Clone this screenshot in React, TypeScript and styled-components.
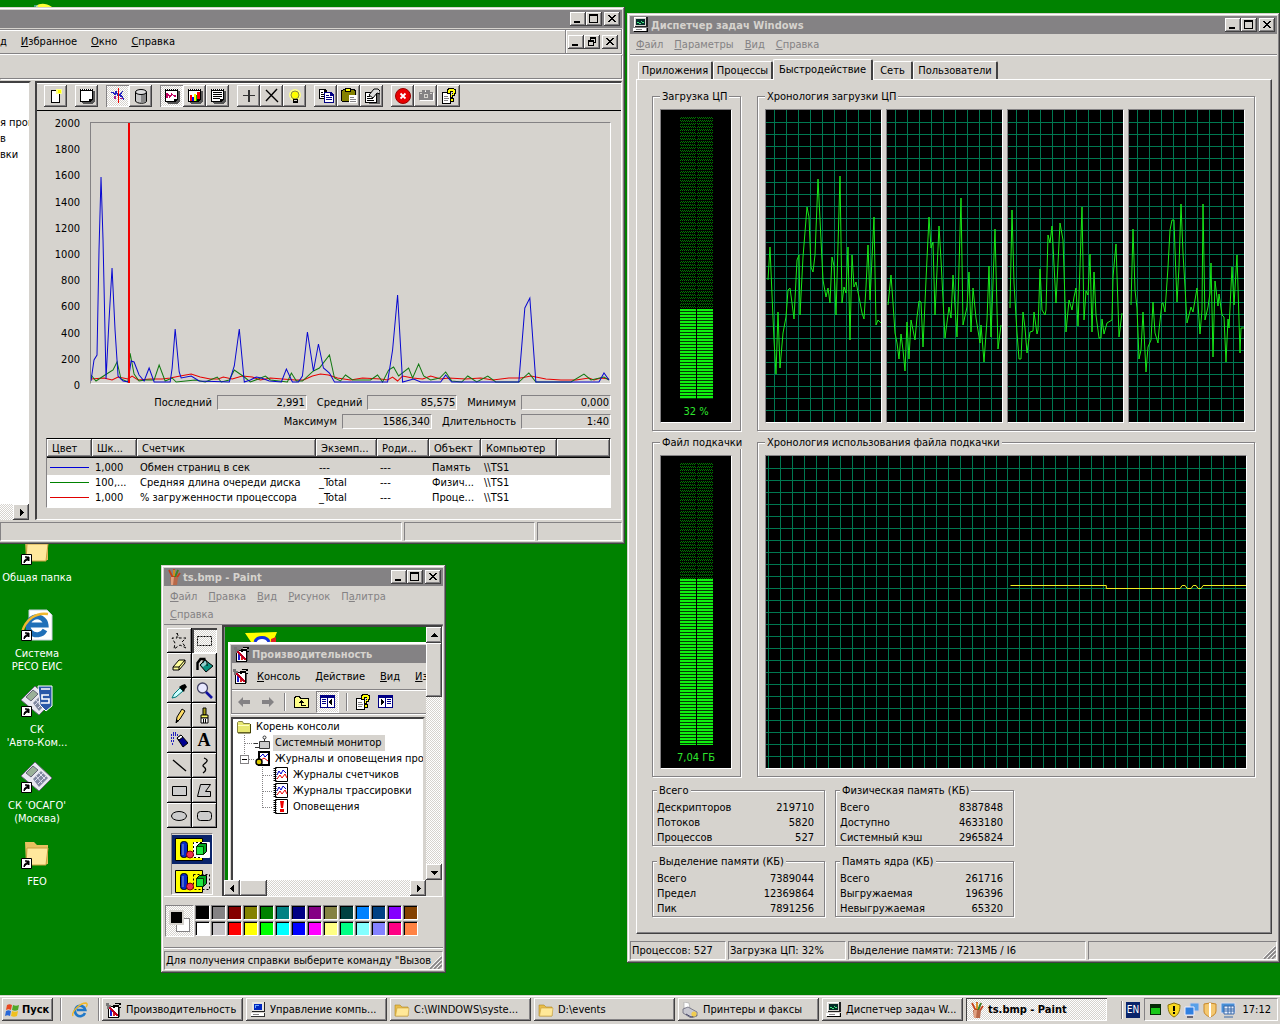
import React from "react";
import styled, { createGlobalStyle, css } from "styled-components";

const c = {
  face: "#d6d3ce",
  light: "#ffffff",
  shadow: "#848284",
  dark: "#424142",
  desk: "#008200",
};

const Global = createGlobalStyle`
  *, *::before, *::after { box-sizing: border-box; }
  body { margin: 0; background: ${c.desk}; }
  body, button, input, table {
    font-family: "DejaVu Sans Condensed", "DejaVu Sans", Tahoma, sans-serif;
    font-size: 11px;
    line-height: 13px;
    color: #000;
  }
  button { border: 0; padding: 0; margin: 0; background: none; }
  svg { display: block; flex: none; }
`;

const raised = css`
  background: ${c.face};
  box-shadow: inset -1px -1px ${c.dark}, inset 1px 1px ${c.light}, inset -2px -2px ${c.shadow};
`;
const sunken = css`
  border: 1px solid;
  border-color: ${c.shadow} ${c.light} ${c.light} ${c.shadow};
`;
const checker = css`
  background: repeating-conic-gradient(${c.face} 0 25%, ${c.light} 0 50%) 0 0 / 2px 2px;
`;

/* ---------- desktop ---------- */
const Screen = styled.div`
  min-height: 100vh;
  display: flex;
  flex-direction: column;
  overflow: hidden;
`;
const Desktop = styled.main`
  position: relative;
  flex: 1;
  background: ${c.desk};
`;
const Shortcuts = styled.nav`
  position: absolute;
  left: 0;
  top: 533px;
  width: 74px;
  display: grid;
  grid-auto-rows: 76px;
`;
const Shortcut = styled.a`
  display: flex;
  flex-direction: column;
  align-items: center;
  gap: 5px;
  color: #fff;
  text-decoration: none;
  text-align: center;
  white-space: pre-line;
`;
const Peek = styled.div`
  position: absolute;
  left: 34px;
  top: 3px;
`;
const Win = styled.section<{ x: number; y: number; w: number; cut?: boolean }>`
  position: absolute;
  left: ${(p) => p.x}px;
  top: ${(p) => p.y}px;
  width: ${(p) => p.w}px;
  padding: ${(p) => (p.cut ? "3px 3px 3px 0" : "3px")};
  display: flex;
  flex-direction: column;
  background: ${c.face};
  box-shadow: inset -1px -1px ${c.dark},
    inset ${(p) => (p.cut ? 0 : 1)}px 1px ${c.face},
    inset -2px -2px ${c.shadow},
    inset ${(p) => (p.cut ? 0 : 2)}px 2px ${c.light};
`;
const TitleBar = styled.header`
  height: 18px;
  padding: 0 2px 0 3px;
  display: flex;
  align-items: center;
  gap: 2px;
  background: ${c.shadow};
  color: ${c.face};
  font-weight: bold;
  white-space: nowrap;
`;
const Grow = styled.span`
  flex: 1;
`;
const Controls = styled.div`
  display: flex;
`;
const CtlButton = styled.button`
  width: 16px;
  height: 14px;
  display: grid;
  place-items: center;
  ${raised}
  &:last-child { margin-left: 2px; }
`;

const WindowControls = ({ restore }: { restore?: boolean }) => (
  <Controls>
    <CtlButton aria-label="Свернуть">
      <svg width="10" height="10" shapeRendering="crispEdges"><path d="M1 7h6v2H1z" /></svg>
    </CtlButton>
    <CtlButton aria-label={restore ? "Восстановить" : "Развернуть"}>
      <svg width="10" height="10" shapeRendering="crispEdges">
        {restore ? (
          <path d="M3 0h6v6H7V5h1V2H4v1H3zM1 3h6v6H1zM2 5v3h4V5z" fillRule="evenodd" />
        ) : (
          <path d="M0 0h9v9H0zM1 2v6h7V2z" fillRule="evenodd" />
        )}
      </svg>
    </CtlButton>
    <CtlButton aria-label="Закрыть">
      <svg width="10" height="10" shapeRendering="crispEdges">
        <path d="M1 1h2v1h1v1h2V2h1V1h2v1H8v1H7v1H6v1h1v1h1v1h1v1H7V7H6V6H4v1H3v1H1V7h1V6h1V5h1V4H3V3H2V2H1z" />
      </svg>
    </CtlButton>
  </Controls>
);

const MenuBar = styled.div<{ pad?: string; gap?: number }>`
  display: flex;
  flex-wrap: wrap;
  align-items: center;
  column-gap: ${(p) => p.gap ?? 11}px;
  padding: ${(p) => p.pad ?? "0 6px"};
`;
const MenuButton = styled.button<{ dim?: boolean }>`
  height: 18px;
  color: ${(p) => (p.dim ? c.shadow : "#000")};
  white-space: nowrap;
`;
const Access = ({ text }: { text: string }) => {
  const [a, b] = text.split("&");
  return b === undefined ? <>{a}</> : <>{a}<u>{b[0]}</u>{b.slice(1)}</>;
};
const Menu = ({ items, dim, pad, gap }: { items: string[]; dim?: boolean; pad?: string; gap?: number }) => (
  <MenuBar pad={pad} gap={gap}>
    {items.map((t) => (
      <MenuButton key={t} dim={dim}><Access text={t} /></MenuButton>
    ))}
  </MenuBar>
);

/* ---------- small drawings ---------- */
const Folder = ({ s = 16 }: { s?: number }) => (
  <svg width={s} height={s} viewBox="0 0 16 16">
    <path d="M1 3h5l2 2h6v9H1z" fill="#e8bc48" stroke="#b08820" strokeWidth=".6" />
    <path d="M3 6h12l-1 8H1.5z" fill="#ffe898" stroke="#c8a040" strokeWidth=".6" />
  </svg>
);
const ConsoleFolder = () => (
  <svg width="16" height="16">
    <path d="M1.500 3.500l1-1h4l1 2h6l1 1v8h-13z" fill="#e8e870" stroke="#848242" />
    <path d="M2 6.500h11" stroke="#ffffc0" />
    <path d="M14.500 5v9H2" stroke="#424100" fill="none" />
  </svg>
);
const IeGlyph = ({ s = 16 }: { s?: number }) => (
  <svg width={s} height={s} viewBox="0 0 16 16" fill="none">
    <path d="M13 11a5.2 5.2 0 1 1 .3-3H5" stroke="#2078c8" strokeWidth="2.6" />
    <path d="M1 14C-1 10 8 1 14 1c2 1 1 3 0 4" stroke="#f0b828" strokeWidth="1.4" />
  </svg>
);
const Monitor = () => (
  <svg width="16" height="16" shapeRendering="crispEdges">
    <path d="M1 0h13v10H1z" fill="#d6d3ce" />
    <path d="M1 0h12v1H2v9H1z" fill="#fff" />
    <path d="M13 0h2v10h-2zM2 9h12v1H2z" fill="#222" />
    <path d="M3 2h9v6H3z" fill="#042c28" />
    <path d="M4 5h2v1h2V4h1v1h2v1H9V5H8v2H6V6H4z" fill="#40f080" />
    <path d="M0 11h13v3H0z" fill="#fff" />
    <path d="M1 14h13v-3h1v4H1z" />
    <path d="M3 12h6v1H3z" fill="#848284" />
  </svg>
);
const Computer = () => (
  <svg width="16" height="16" shapeRendering="crispEdges">
    <path d="M2 0h13v10H2z" fill="#222" />
    <path d="M2 0h12v9H2z" fill="#e8e6e0" />
    <path d="M4 2h8v6H4z" fill="#0028c0" />
    <path d="M5 3h4v1H6v2H5z" fill="#68a8ff" />
    <path d="M1 11h14v4H1z" fill="#333" />
    <path d="M1 11h13v3H1z" fill="#fff" />
    <path d="M3 12h6v1H3z" fill="#848284" />
  </svg>
);
const PerfIcon = () => (
  <svg width="16" height="16" shapeRendering="crispEdges">
    <path d="M2 4h11v12H2z" />
    <path d="M3 5h9v10H3z" fill="#fff" />
    <path d="M4 8h2v6H4z" fill="#2020d0" />
    <path d="M7 9h2v5H7z" fill="#e02020" />
    <path d="M10 11h1v3h-1z" fill="#2020d0" />
    <path d="M3 5l9 9" stroke="#c00020" strokeWidth="1.6" />
    <path d="M0 1h3v2h2v2H3v2H1V4H0z" fill="#777" />
    <path d="M7 3h2V1h6v2h-2v2h2v1h-3V4H9v2H7z" />
    <path d="M9 2h4v1H9z" fill="#d6d3ce" />
    <path d="M13 6h1v9h-1z" fill="#555" />
  </svg>
);
const PaintIcon = () => (
  <svg width="14" height="16">
    <path d="M2 1l4 8M11 1L8 9M7 0v9M13 4l-4 6" stroke="#c44018" strokeWidth="1.7" />
    <path d="M11 1l-3 7" stroke="#2c8c30" strokeWidth="1.7" /><path d="M7 1v6" stroke="#e8d020" />
    <path d="M3 8h8l-1 8H4z" fill="#b86848" /><path d="M4 8h3l-1 8H4z" fill="#e0a080" />
  </svg>
);
const Printer = () => (
  <svg width="17" height="16">
    <path d="M2 0l5 1 1 6-6-1z" fill="#fff" stroke="#aaa" strokeWidth=".7" />
    <path d="M1 7l5-2 9 5v4l-6 2-8-5z" fill="#c8c8d0" stroke="#667" strokeWidth=".8" />
    <path d="M4 12l5 3 6-2" stroke="#446" fill="none" /><circle cx="12" cy="12" r="2.6" fill="#f0cc50" />
  </svg>
);
const Arrow = ({ d }: { d: "up" | "down" | "left" | "right" }) => (
  <svg width="7" height="7" shapeRendering="crispEdges">
    <path d={{ up: "M3 1h1v1h1v1h1v1h1v1H0V4h1V3h1V2h1z", down: "M0 2h7v1H6v1H5v1H4v1H3V5H2V4H1V3H0z", left: "M5 0v7H4V6H3V5H2V4H1V3h1V2h1V1h1V0z", right: "M2 0v7h1V6h1V5h1V4h1V3H5V2H4V1H3V0z" }[d]} />
  </svg>
);
const HelpSheet = () => (
  <svg width="16" height="16" shapeRendering="crispEdges">
    <path d="M1 4h9v12H1z" />
    <path d="M2 5h7v10H2z" fill="#fff" />
    <path d="M3 8h4v1H3zM3 10h5v1H3zM3 12h4v1H3z" fill="#848284" />
    <path d="M7 0h6v1h2v5h-1v2h-2v2H9V7h2V5h1V4H9v2H6V1h1z" />
    <path d="M8 1h5v1h1v3h-1v2h-2v2h-1V7h1V6h1V3H9v2H7V2h1z" fill="#ff0" />
    <path d="M9 10h4v4H9z" />
    <path d="M10 11h2v2h-2z" fill="#ff0" />
  </svg>
);

/* ---------- performance console ---------- */
const ConsoleMenuRow = styled.div`
  margin-top: 1px;
  height: 25px;
  display: flex;
  border: 1px solid ${c.shadow};
  border-width: 1px 1px 1px 0;
  box-shadow: inset 0 1px ${c.light}, 0 1px ${c.light}, 1px 0 ${c.light};
  overflow: hidden;
`;
const MdiBox = styled.div`
  margin-left: auto;
  padding: 0 3px 0 2px;
  display: flex;
  align-items: center;
  border-left: 1px solid ${c.shadow};
  box-shadow: inset 1px 0 ${c.light};
`;
const ConsoleToolRow = styled.div`
  height: 24px;
  margin-top: 1px;
  border: 1px solid ${c.shadow};
  border-width: 0 1px 1px 0;
  box-shadow: 1px 1px ${c.light};
`;
const ConsoleBody = styled.div`
  margin-top: 2px;
  display: flex;
  gap: 4px;
`;
const TreeSliver = styled.div`
  width: 31px;
  flex: none;
  display: flex;
  flex-direction: column;
  background: #fff;
  border-top: 2px solid ${c.dark};
  border-right: 2px solid ${c.face};
  overflow: hidden;
`;
const TreeLines = styled.div`
  flex: 1;
  padding-top: 32px;
  line-height: 16px;
  white-space: pre;
`;
const ScrollBtn = styled.button`
  width: 16px;
  height: 16px;
  flex: none;
  display: grid;
  place-items: center;
  ${raised}
`;
const Track = styled.div<{ vertical?: boolean; end?: boolean }>`
  display: flex;
  flex-direction: ${(p) => (p.vertical ? "column" : "row")};
  justify-content: ${(p) => (p.end ? "flex-end" : "flex-start")};
  flex: none;
  ${checker}
`;
const Thumb = styled.div<{ len: number; vertical?: boolean }>`
  width: ${(p) => (p.vertical ? 16 : p.len)}px;
  height: ${(p) => (p.vertical ? p.len : 16)}px;
  ${raised}
`;
const Panel = styled.div`
  flex: 1;
  min-width: 0;
  border: 1px solid ${c.light};
  border-left: 2px solid ${c.dark};
  border-top: 2px solid ${c.dark};
`;
const Tools = styled.div`
  height: 28px;
  padding: 2px 7px;
  display: flex;
  gap: 8px;
  border-bottom: 1px solid #000;
  box-shadow: inset 0 1px ${c.light};
`;
const ToolSet = styled.div`
  display: flex;
`;
const Tool = styled.button<{ on?: boolean }>`
  width: 23px;
  height: 22px;
  display: grid;
  place-items: center;
  ${(p) =>
    p.on
      ? css`${checker} box-shadow: inset 1px 1px ${c.shadow}, inset -1px -1px ${c.light};`
      : raised}
`;
const PanelBody = styled.div`
  padding: 5px 10px 11px 9px;
`;
const ChartRow = styled.div`
  display: flex;
  gap: 10px;
`;
const Axis = styled.div`
  width: 34px;
  padding-top: 1px;
  display: flex;
  flex-direction: column;
  justify-content: space-between;
  text-align: right;
`;
const Plot = styled.div`
  flex: 1;
  margin: 6px 0 8px;
  ${sunken}
`;
const Stats = styled.div`
  margin-top: 3px;
  display: grid;
  gap: 4px;
`;
const StatRow = styled.div`
  display: flex;
  justify-content: flex-end;
  gap: 10px;
`;
const Stat = styled.label`
  display: flex;
  align-items: center;
  gap: 5px;
`;
const StatBox = styled.input`
  width: 90px;
  height: 15px;
  padding: 0 1px;
  text-align: right;
  background: transparent;
  outline: 0;
  ${sunken}
`;
const CounterBox = styled.div`
  margin-top: 9px;
  padding-bottom: 2px;
  background: #fff;
  border: 1px solid;
  border-color: #000 ${c.light} ${c.light} ${c.shadow};
`;
const Counters = styled.table`
  width: 100%;
  table-layout: fixed;
  border-collapse: separate;
  border-spacing: 0;
  th {
    height: 19px;
    padding: 0 0 0 5px;
    text-align: left;
    font-weight: normal;
    border-bottom: 1px solid #000;
    ${raised}
  }
  td { height: 15px; padding: 0 0 0 3px; }
  th, td { white-space: nowrap; overflow: hidden; }
  tbody tr:first-child { background: ${c.face}; }
  tbody tr:first-child td { height: 17px; padding-top: 1px; }
`;
const StatusBar = styled.footer<{ cols: string; top?: number }>`
  margin-top: ${(p) => p.top ?? 2}px;
  height: 19px;
  display: grid;
  grid-template-columns: ${(p) => p.cols};
  column-gap: 2px;
`;
const StatusCell = styled.div`
  position: relative;
  padding: 2px 1px;
  white-space: nowrap;
  overflow: hidden;
  ${sunken}
`;
const GripBox = styled.span`
  position: absolute;
  right: 0;
  bottom: 0;
`;
const Grip = () => (
  <GripBox>
    <svg width="13" height="13">
      <path d="M1 13L13 1M5 13l8-8M9 13l4-4" stroke="#848284" strokeWidth="1.6" />
      <path d="M0 12L12 0M4 12l8-8M8 12l4-4" stroke="#fff" strokeWidth=".8" />
    </svg>
  </GripBox>
);

const blue = "91,381 94,360 97,355 99,250 101,177 103,240 106,379 109,320 112,268 115,330 118,376 123,381 128,382 131,361 134,362 139,375 144,381 149,368 154,382 170,382 172,368 175,329 179,372 181,378 191,376 199,381 229,382 234,366 239,329 244,382 250,380 256,377 261,378 269,381 281,382 286,369 292,382 298,382 302,376 307,332 313,371 318,344 323,368 329,373 334,382 387,382 392,350 397,295 402,382 413,379 420,382 440,382 445,375 451,382 518,382 524,308 529,298 535,382 598,382 603,373 608,380";
const green = "91,375 96,381 105,375 113,370 117,362 121,379 128,382 130,353 134,374 139,381 145,380 154,380 159,365 165,381 172,378 176,382 195,380 205,382 217,377 221,382 229,380 234,370 244,377 250,382 258,379 265,376 270,380 287,382 291,373 296,381 302,381 313,371 319,368 329,355 334,378 340,381 345,375 352,380 370,380 377,375 382,382 388,370 393,367 398,376 408,368 412,378 418,364 423,376 430,380 439,378 445,372 451,381 461,382 467,376 476,382 487,376 495,382 518,382 528,373 535,382 570,382 583,374 590,380 603,377 608,380";
const red = "91,379 104,378 112,380 118,377 128,379 132,376 138,380 150,379 162,379 170,378 180,376 191,374 200,377 210,379 218,379 223,377 232,379 242,376 252,377 260,380 270,378 282,379 295,380 303,380 312,376 320,374 328,375 337,378 350,380 362,378 380,379 387,380 392,377 397,381 402,376 412,378 422,379 430,376 440,379 448,378 465,379 480,378 492,380 508,378 520,378 530,376 545,379 560,380 575,380 588,378 593,380 600,378 608,379";

const sheet = (
  <>
    <path d="M3 3h13v10l-3 3H4v-1H3z" fill="#555" />
    <path d="M1 1h13v10l-3 3H1z" />
    <path d="M2 3h11v8h-3v2H2z" fill="#fff" />
    <path d="M2 1h1v1H2zM4 1h1v1H4zM6 1h1v1H6zM8 1h1v1H8zM10 1h1v1h-1zM12 1h1v1h-1z" fill="#fff" />
  </>
);
const toolIcons: Record<string, React.ReactNode> = {
  "Новый набор": <><path d="M3 2h9v13H3z" /><path d="M4 3h7v11H4z" fill="#fff" /><path d="M8 1h6v5H8z" fill="#ff8" /><path d="M10 2h3v3h-3z" fill="#ff0" /></>,
  "Очистить": sheet,
  "Текущая активность": <><path d="M1 4h2v1h1v1h1V3h1v2h1v3M9 6l2 3M10 5l4 7M13 3l-4 5" stroke="#2020c0" fill="none" /><path d="M10 10h3v1h-3zM4 8h2v3H4z" fill="#a0208c" /><path d="M8 0h1v15H8z" fill="#f00000" /></>,
  "Журнал": <g shapeRendering="auto"><path d="M2.500 4v9c1 3 11 3 11 0V4" fill="#c8c8c8" stroke="#000" /><path d="M8 6h5v8l-5 1z" fill="#888" /><ellipse cx="8" cy="4" rx="5.500" ry="2.500" fill="#ddd" stroke="#000" /></g>,
  "График": <>{sheet}<path d="M3 10V6h1l2 3 2-3 2 2h2" stroke="#c00060" fill="none" strokeWidth="1.400" /></>,
  "Гистограмма": <>{sheet}<path d="M3 7h2v6H3z" fill="#f00" /><path d="M5 9h2v4H5z" fill="#00f" /><path d="M7 6h2v7H7z" fill="#ff0" /><path d="M9 7h1v6H9z" fill="#0b0" /><path d="M10 4h3v7h-3z" fill="#f00" /></>,
  "Отчет": <>{sheet}<path d="M3 4h9v1H3zM3 6h9v1H3zM3 8h9v1H3zM3 10h7v1H3z" /></>,
  "Добавить": <path d="M7 2h2v5h5v1H9v6H7V8H2V7h5z" fill="#333" />,
  "Удалить": <path d="M2 2l12 12M13 1L2 13" stroke="#000" strokeWidth="1.400" shapeRendering="auto" />,
  "Выделить": <><g shapeRendering="auto"><circle cx="8" cy="7" r="6" fill="#ff8" /><circle cx="8" cy="7" r="4" fill="#ff0" stroke="#884" /></g><path d="M6 11h5v4H6z" /><path d="M7 12h3v1H7z" fill="#d6d3ce" /></>,
  "Копировать": <><path d="M1 1h6l2 2v8H1z" /><path d="M2 2h4v2h2v6H2z" fill="#fff" /><path d="M3 4h2v1H3zM3 6h4v1H3zM3 8h4v1H3z" /><path d="M6 4h7l3 3v8H6z" fill="#000084" /><path d="M7 5h5v3h3v6H7z" fill="#fff" /><path d="M8 7h3v1H8zM8 9h6v1H8zM8 11h6v1H8z" fill="#000084" /></>,
  "Вставить": <><path d="M0 2h2V1h12v1h1v12H1v-1H0z" /><path d="M1 3h1V2h11v1h1v10H1z" fill="#848200" /><path d="M4 0h6v4H4z" /><path d="M5 1h4v2H5z" fill="#ff0" /><path d="M8 7h8v8H8z" fill="#fff" /><path d="M9 9h4v1H9zM9 11h6v1H9zM9 13h6v1H9z" fill="#848284" /></>,
  "Свойства": <><path d="M5 4h11v12H5z" fill="#666" /><path d="M1 4h12v11H1z" /><path d="M2 5h10v9H2z" fill="#fff" /><path d="M3 8h3v1H3zM3 10h6v1H3zM3 12h7v1H3z" /><path d="M5 7l5-6h4l2 2v3l-3-1-4 5z" fill="#ddd" stroke="#000" shapeRendering="auto" /></>,
  "Стоп": <g shapeRendering="auto"><circle cx="8" cy="8" r="7.500" fill="#e80000" stroke="#900" /><path d="M5.500 5.500l5 5M10.500 5.500l-5 5" stroke="#fff" strokeWidth="1.800" /></g>,
  "Снимок": <><path d="M2 5h3V3h6v2h5v8H2z" fill="#fff" /><path d="M1 4h3V2h3v2h1V2h4v2h3v8H1z" fill="#848284" /><path d="M6 6h4v4H6zM2 5h2v1H2zM12 5h2v1h-2z" fill="#d6d3ce" /><path d="M7 7h2v2H7z" fill="#848284" /></>,
};
const toolSets = [["Новый набор"], ["Очистить"], ["Текущая активность", "Журнал"], ["График", "Гистограмма", "Отчет"], ["Добавить", "Удалить", "Выделить"], ["Копировать", "Вставить", "Свойства"], ["Стоп", "Снимок", "Справка"]];
const pressed = ["Текущая активность", "График"];

const counters = [
  ["#0000d8", "1,000", "Обмен страниц в сек", "---", "---", "Память", "\\\\TS1"],
  ["#008200", "100,...", "Средняя длина очереди диска", "_Total", "---", "Физич...", "\\\\TS1"],
  ["#e00000", "1,000", "% загруженности процессора", "_Total", "---", "Проце...", "\\\\TS1"],
];
const ColorLine = styled.hr<{ color: string }>`
  width: 39px;
  height: 1px;
  margin: 0;
  border: 0;
  background: ${(p) => p.color};
`;

const StatField = ({ name, value }: { name: string; value: string }) => (
  <Stat>{name}<StatBox readOnly value={value} /></Stat>
);

const PerformanceConsole = () => (
  <Win x={0} y={7} w={625} cut>
    <TitleBar><Grow /><WindowControls /></TitleBar>
    <ConsoleMenuRow>
      <Menu items={["д", "&Избранное", "&Окно", "&Справка"]} pad="0" gap={14} />
      <MdiBox><WindowControls restore /></MdiBox>
    </ConsoleMenuRow>
    <ConsoleToolRow />
    <ConsoleBody>
      <TreeSliver>
        <TreeLines>{"я прои\nв\nвки"}</TreeLines>
        <Track end><ScrollBtn aria-label="Вправо"><Arrow d="right" /></ScrollBtn></Track>
      </TreeSliver>
      <Panel>
        <Tools>
          {toolSets.map((set) => (
            <ToolSet key={set[0]}>
              {set.map((t) => (
                <Tool key={t} on={pressed.includes(t)} aria-label={t}>
                  {toolIcons[t] ? <svg width="16" height="16" shapeRendering="crispEdges">{toolIcons[t]}</svg> : <HelpSheet />}
                </Tool>
              ))}
            </ToolSet>
          ))}
        </Tools>
        <PanelBody>
          <ChartRow>
            <Axis>
              {[2000, 1800, 1600, 1400, 1200, 1000, 800, 600, 400, 200, 0].map((v) => <span key={v}>{v}</span>)}
            </Axis>
            <Plot>
              <svg width="100%" height="260" viewBox="91 123 518 260" preserveAspectRatio="none" fill="none">
                <polyline points={red} stroke="#e80000" />
                <polyline points={green} stroke="#107810" />
                <polyline points={blue} stroke="#0808d0" />
                <path d="M129 123v260" stroke="#f00000" strokeWidth="2" shapeRendering="crispEdges" />
              </svg>
            </Plot>
          </ChartRow>
          <Stats>
            <StatRow>
              <StatField name="Последний" value="2,991" />
              <StatField name="Средний" value="85,575" />
              <StatField name="Минимум" value="0,000" />
            </StatRow>
            <StatRow>
              <StatField name="Максимум" value="1586,340" />
              <StatField name="Длительность" value="1:40" />
            </StatRow>
          </Stats>
          <CounterBox>
            <Counters>
              <colgroup>
                {[45, 45, 179, 61, 52, 52, 76].map((w, i) => <col key={i} width={w} />)}
                <col />
              </colgroup>
              <thead>
                <tr>{["Цвет", "Шк...", "Счетчик", "Экземп...", "Роди...", "Объект", "Компьютер", ""].map((h) => <th key={h}>{h}</th>)}</tr>
              </thead>
              <tbody>
                {counters.map(([color, ...cells]) => (
                  <tr key={color}>
                    <td><ColorLine color={color} /></td>
                    {cells.map((t, i) => <td key={i}>{t}</td>)}
                    <td />
                  </tr>
                ))}
              </tbody>
            </Counters>
          </CounterBox>
        </PanelBody>
      </Panel>
    </ConsoleBody>
    <StatusBar cols="402px 131px 1fr"><StatusCell /><StatusCell /><StatusCell /></StatusBar>
  </Win>
);

/* ---------- task manager ---------- */
const TaskMenu = styled.div`
  height: 21px;
  border-bottom: 1px solid ${c.shadow};
  box-shadow: 0 1px ${c.light};
`;
const Tabs = styled.div`
  margin: 4px 0 0 8px;
  height: 20px;
  display: flex;
  align-items: flex-end;
`;
const Tab = styled.button<{ active?: boolean; w: number }>`
  width: ${(p) => p.w}px;
  height: ${(p) => (p.active ? 21 : 18)}px;
  margin-bottom: ${(p) => (p.active ? -1 : 0)}px;
  padding-bottom: ${(p) => (p.active ? 2 : 0)}px;
  white-space: nowrap;
  background: ${c.face};
  border: 1px solid ${c.light};
  border-right: 2px solid ${c.dark};
  border-bottom: 0;
  border-radius: 2px 2px 0 0;
  z-index: ${(p) => (p.active ? 1 : 0)};
`;
const TabPage = styled.div`
  margin: 0 5px 0 6px;
  padding: 10px 15px 15px 15px;
  border: 1px solid;
  border-color: ${c.light} ${c.dark} ${c.dark} ${c.light};
  box-shadow: inset -1px -1px ${c.shadow};
  display: grid;
`;
const GroupRow = styled.div<{ cols: string; gap: number; top?: number }>`
  margin-top: ${(p) => p.top ?? 0}px;
  display: grid;
  grid-template-columns: ${(p) => p.cols};
  column-gap: ${(p) => p.gap}px;
`;
const Group = styled.fieldset<{ pad: string }>`
  min-width: 0;
  margin: 0 1px 1px 0;
  padding: ${(p) => p.pad};
  border: 1px solid ${c.shadow};
  box-shadow: 1px 1px ${c.light}, inset 1px 1px ${c.light};
  > legend { padding: 0 2px; white-space: nowrap; background: ${c.face}; }
`;
const Screenlet = styled.div`
  height: 314px;
  background: #000;
  overflow: hidden;
  ${sunken}
`;
const MeterBox = styled(Screenlet)`
  padding-top: 7px;
  display: flex;
  flex-direction: column;
  align-items: center;
  gap: 6px;
  color: #2ee62e;
`;
const Meter = styled.div`
  width: 33px;
  height: 282px;
  display: flex;
  flex-direction: column;
`;
const Bars = styled.div<{ lit?: boolean }>`
  flex: ${(p) => (p.lit ? "none" : "1")};
  background: ${(p) =>
    p.lit
      ? "linear-gradient(#000,#000) 16px 0 / 1px 100% no-repeat, repeating-linear-gradient(#10f010 0 2px, #043c04 2px 3px)"
      : "linear-gradient(#000,#000) 16px 0 / 1px 100% no-repeat, repeating-linear-gradient(transparent 0 2px, #000 2px 3px), repeating-conic-gradient(#007800 0 25%, #000 0 50%) 0 0 / 2px 2px"};
`;
const Graphs = styled.div`
  display: grid;
  grid-template-columns: repeat(4, 1fr);
  gap: 4px;
`;
const Totals = styled.dl`
  margin: 0;
  display: grid;
  grid-template-columns: 1fr auto;
  line-height: 15px;
  dt, dd { margin: 0; }
  dd { text-align: right; }
`;

const cpu = [
  "2,170 4,137 6,185 8,230 10,264 12,202 14,258 17,223 20,207 22,180 24,178 26,193 28,209 31,150 33,145 34,205 37,147 41,97 43,107 45,157 47,162 49,145 52,69 55,130 57,170 60,187 62,178 64,193 66,147 68,156 70,205 74,66 76,193 78,177 80,183 82,137 84,230 86,145 88,177 90,172 93,187 96,203 98,209 100,177 102,135 104,190 108,107 110,215 112,210 115,213",
  "1,195 4,165 6,193 8,223 10,233 12,249 14,224 16,240 18,261 20,212 22,249 24,210 28,230 30,207 32,191 34,192 36,237 39,170 42,107 44,138 46,132 48,205 52,116 54,150 58,228 62,197 64,208 66,165 70,227 74,88 76,215 80,197 82,162 84,222 86,178 89,208 93,233 94,215 97,252 100,210 102,156 104,227 108,119 111,239 114,215",
  "2,198 4,100 6,173 9,223 11,249 13,249 15,202 17,218 19,243 22,222 25,221 26,202 29,224 30,220 32,159 34,200 37,205 38,200 40,125 42,133 44,116 48,193 52,113 55,130 58,222 61,190 64,200 66,187 68,178 70,216 74,97 76,210 78,181 80,185 82,144 84,222 86,162 88,205 91,228 93,228 94,209 96,224 99,213 104,210 105,167 108,134 111,227 114,203",
  "2,195 4,119 6,180 8,198 10,249 12,240 14,202 17,262 19,237 22,230 24,192 26,223 29,233 30,220 33,193 34,193 36,202 39,157 41,120 43,110 45,110 46,140 48,192 50,157 52,94 54,143 56,177 58,213 62,197 64,202 68,178 71,224 73,200 74,94 76,210 79,197 81,183 82,153 84,247 86,171 89,196 90,184 93,205 95,207 97,252 99,209 100,218 103,157 105,195 108,145 111,243 112,218 115,218",
];
const gridPath = (w: number, x0: number) => {
  let d = "";
  for (let x = x0; x < w; x += 12) d += `M${x} 0h1v312h-1z`;
  for (let y = 12; y < 312; y += 12) d += `M0 ${y}h${w}v1H0z`;
  return d;
};

const MeterGroup = ({ title, value, percent }: { title: string; value: string; percent: number }) => (
  <Group pad="6px 8px 7px 7px">
    <legend>{title}</legend>
    <MeterBox>
      <Meter><Bars /><Bars lit style={{ height: `${percent}%` }} /></Meter>
      {value}
    </MeterBox>
  </Group>
);
const TotalsGroup = ({ title, rows }: { title: string; rows: string[][] }) => (
  <Group pad="3px 10px 0 4px">
    <legend>{title}</legend>
    <Totals>{rows.map(([k, v]) => <React.Fragment key={k}><dt>{k}</dt><dd>{v}</dd></React.Fragment>)}</Totals>
  </Group>
);

const TaskManager = () => (
  <Win x={627} y={13} w={653}>
    <TitleBar><Monitor />Диспетчер задач Windows<Grow /><WindowControls /></TitleBar>
    <TaskMenu><Menu items={["&Файл", "&Параметры", "&Вид", "&Справка"]} dim pad="1px 6px 0" /></TaskMenu>
    <Tabs role="tablist">
      <Tab role="tab" w={75}>Приложения</Tab>
      <Tab role="tab" w={60}>Процессы</Tab>
      <Tab role="tab" w={100} active aria-selected>Быстродействие</Tab>
      <Tab role="tab" w={40}>Сеть</Tab>
      <Tab role="tab" w={85}>Пользователи</Tab>
    </Tabs>
    <TabPage>
      <GroupRow cols="90px 1fr" gap={15}>
        <MeterGroup title="Загрузка ЦП" value="32 %" percent={32} />
        <Group pad="6px 9px 7px 7px">
          <legend>Хронология загрузки ЦП</legend>
          <Graphs>
            {cpu.map((pts, i) => (
              <Screenlet key={i}>
                <svg width="100%" height="312" viewBox="0 0 115 312" preserveAspectRatio="none" fill="none">
                  <path d={gridPath(115, 8)} fill="#007850" shapeRendering="crispEdges" />
                  <polyline points={pts} stroke="#18e818" />
                </svg>
              </Screenlet>
            ))}
          </Graphs>
        </Group>
      </GroupRow>
      <GroupRow cols="90px 1fr" gap={15} top={4}>
        <MeterGroup title="Файл подкачки" value="7,04 ГБ" percent={59} />
        <Group pad="6px 7px 7px 7px">
          <legend>Хронология использования файла подкачки</legend>
          <Screenlet>
            <svg width="100%" height="312" viewBox="0 0 481 312" preserveAspectRatio="none" fill="none">
              <path d={gridPath(481, 2)} fill="#007850" shapeRendering="crispEdges" />
              <path d="M245 129.500h96v3h74l2-3h3l2 3h4l2-3h3l2 3h3l2-3h43" stroke="#f0f020" />
            </svg>
          </Screenlet>
        </Group>
      </GroupRow>
      <GroupRow cols="174px 180px" gap={9} top={6}>
        <TotalsGroup title="Всего" rows={[["Дескрипторов", "219710"], ["Потоков", "5820"], ["Процессов", "527"]]} />
        <TotalsGroup title="Физическая память (КБ)" rows={[["Всего", "8387848"], ["Доступно", "4633180"], ["Системный кэш", "2965824"]]} />
      </GroupRow>
      <GroupRow cols="174px 180px" gap={9} top={8}>
        <TotalsGroup title="Выделение памяти (КБ)" rows={[["Всего", "7389044"], ["Предел", "12369864"], ["Пик", "7891256"]]} />
        <TotalsGroup title="Память ядра (КБ)" rows={[["Всего", "261716"], ["Выгружаемая", "196396"], ["Невыгружаемая", "65320"]]} />
      </GroupRow>
    </TabPage>
    <StatusBar cols="96px 118px 238px 1fr" top={7}>
      <StatusCell>Процессов: 527</StatusCell>
      <StatusCell>Загрузка ЦП: 32%</StatusCell>
      <StatusCell>Выделение памяти: 7213МБ / I6</StatusCell>
      <StatusCell><Grip /></StatusCell>
    </StatusBar>
  </Win>
);

/* ---------- paint ---------- */
const PaintBody = styled.div`
  margin-top: 1px;
  display: flex;
  gap: 5px;
  border-top: 1px solid ${c.shadow};
  border-bottom: 1px solid ${c.light};
`;
const ToolBox = styled.div`
  width: 53px;
  padding: 3px 0 0 3px;
`;
const ToolGrid = styled.div`
  display: grid;
  grid-template-columns: 25px 25px;
  grid-auto-rows: 25px;
`;
const PaintTool = styled.button<{ on?: boolean }>`
  display: grid;
  place-items: center;
  ${(p) =>
    p.on
      ? css`${checker} box-shadow: inset 2px 2px ${c.dark}, inset -1px -1px ${c.light};`
      : css`background: ${c.face}; box-shadow: inset -1px -1px #000, inset 1px 1px ${c.light}, inset -2px -2px ${c.shadow};`}
`;
const Options = styled.div`
  margin: 5px 4px 0;
  height: 62px;
  padding-top: 1px;
  display: grid;
  grid-template-columns: 100%;
  align-content: start;
  gap: 3px;
  overflow: hidden;
  ${sunken}
`;
const Option = styled.button<{ on?: boolean }>`
  height: 29px;
  display: grid;
  place-items: center;
  background: ${(p) => (p.on ? "#0a246a" : "transparent")};
`;
const CanvasFrame = styled.div`
  flex: 1;
  min-width: 0;
  height: 271px;
  display: grid;
  grid-template: 1fr 16px / 1fr 16px;
  border: 2px solid ${c.dark};
  border-width: 2px 1px 0 2px;
  border-right-color: ${c.light};
`;
const Canvas = styled.div`
  overflow: hidden;
  background: ${c.desk};
  border-left: 1px solid ${c.shadow};
  min-height: 0;
`;
const Snapshot = styled.div`
  margin-left: 3px;
  width: 320px;
  padding: 3px;
  background: ${c.face};
  box-shadow: inset 2px 2px ${c.light};
`;
const SnapRow = styled.div<{ h: number; gap: number; pad: number }>`
  height: ${(p) => p.h}px;
  padding-left: ${(p) => p.pad}px;
  display: flex;
  align-items: center;
  gap: ${(p) => p.gap}px;
  border: 1px solid ${c.shadow};
  border-width: 0 0 1px 1px;
  box-shadow: 0 1px ${c.light};
`;
const SnapMenu = styled.span`
  display: flex;
  gap: 15px;
`;
const SnapPressed = styled.span`
  width: 23px;
  height: 22px;
  display: grid;
  place-items: center;
  ${checker}
  ${sunken}
`;
const VSep = styled.span`
  width: 2px;
  height: 18px;
  flex: none;
  align-self: center;
  border-left: 1px solid ${c.shadow};
  border-right: 1px solid ${c.light};
`;
const Tree = styled.ul`
  list-style: none;
  margin: 3px 0 0;
  padding: 0 0 0 3px;
  width: 194px;
  height: 170px;
  overflow: hidden;
  background: #fff;
  border: 2px solid ${c.dark};
  border-right-color: ${c.face};
`;
const Node = styled.li`
  height: 16px;
  display: flex;
  align-items: center;
  white-space: nowrap;
`;
const NodeLabel = styled.span<{ sel?: boolean }>`
  margin-left: 2px;
  padding: 1px 4px 2px 2px;
  background: ${(p) => (p.sel ? c.face : "transparent")};
`;
/* Dotted connectors of the tree: "t" a through line with a branch, "l" a last branch. */
const Guide = ({ kind, box }: { kind?: "t" | "l"; box?: boolean }) => (
  <svg width="18" height="16" shapeRendering="crispEdges">
    {kind && <path d={kind === "t" ? "M8.500 0v16M9 8.500h9" : "M8.500 0v9M9 8.500h9"} stroke="#848284" strokeDasharray="1 1" fill="none" />}
    {box && <><path d="M4 4h9v9H4z" fill="#848284" /><path d="M5 5h7v7H5z" fill="#fff" /><path d="M6 8h5v1H6z" /></>}
  </svg>
);
const PaletteRow = styled.div`
  padding: 8px 0 10px 1px;
  display: flex;
  gap: 1px;
`;
const Current = styled.div`
  width: 29px;
  height: 32px;
  display: grid;
  place-items: center;
  ${checker}
  ${sunken}
`;
const Swatches = styled.div`
  display: grid;
  grid-template-columns: repeat(14, 16px);
`;
const Swatch = styled.button<{ color: string }>`
  width: 15px;
  height: 15px;
  background: ${(p) => p.color};
  border: 1px solid;
  border-color: ${c.shadow} ${c.light} ${c.light} ${c.shadow};
  box-shadow: inset 1px 1px #000;
`;
const PaintStatus = styled(StatusBar)`
  border-top: 1px solid ${c.shadow};
  box-shadow: inset 0 1px ${c.light};
  height: 23px;
  padding-top: 3px;
`;

const swatches = "#000 #848284 #840000 #848200 #008200 #008284 #000084 #840084 #848242 #004142 #0082ff #004184 #8400ff #844100 #fff #c6c3c6 #f00 #ff0 #0f0 #0ff #00f #f0f #ffff84 #00ff84 #84ffff #8482ff #ff0084 #ff8242".split(" ");

const paintTools: [string, React.ReactNode][] = [
  ["Выделение произвольной области", <path d="M6 1l2 5h7l-4 4 4 6-6-3-6 4 1-6-3-5h5z" fill="none" stroke="#000" strokeDasharray="3 2" />],
  ["Выделение", <path d="M1.500 4.500h14v9h-14z" fill="none" stroke="#000" strokeDasharray="2 1" />],
  ["Ластик", <><path d="M2 10l6-7h6v3l-6 7H2z" fill="#ff9" stroke="#000" /><path d="M2 10h6l6-7M8 10v3" stroke="#000" fill="none" /></>],
  ["Заливка", <><path d="M1.500 13V6l3-4h5" fill="none" stroke="#000" strokeWidth="2.400" /><path d="M4 8l5-5 8 6-7 6z" fill="#0a9080" stroke="#000" /><path d="M5 8l4-4 3 2-5 4z" fill="#9cc" /><path d="M7 6c0-7 5-3 4 3" fill="none" stroke="#000" /></>],
  ["Выбор цветов", <><path d="M1 16l2-4 6-6 3 3-7 6z" fill="#cff" stroke="#007878" /><path d="M8 5l5 5 1-3 2-2-2-3-3 1z" fill="#000" /></>],
  ["Масштаб", <><circle cx="6.500" cy="6" r="5" fill="#e8e8ff" stroke="#446" strokeWidth="1.300" /><path d="M10 10l6 6" stroke="#1010a0" strokeWidth="2.600" /></>],
  ["Карандаш", <><path d="M5 16l1-6 5-8 3 2-5 8z" fill="#fd6" stroke="#000" /><path d="M5 16l0-4 3 2z" /></>],
  ["Кисть", <><path d="M7 1h3v7H7z" fill="#a8a018" stroke="#000" /><path d="M5 8h7v3H5z" fill="#ff6" stroke="#000" /><path d="M5 11h7v5H5z" fill="#fff" stroke="#000" /><path d="M7.500 12v4M9.500 12v4" stroke="#000" /></>],
  ["Распылитель", <><path d="M0 3h7M0 6h4M0 9h3M1 12h2M2 1h4" stroke="#2020c0" strokeDasharray="1 1" strokeWidth="2" /><path d="M6 6l4-3 7 8-5 4z" fill="#000090" stroke="#000" /><path d="M6 6l4-3 2 2-4 3z" fill="#fff" stroke="#000" /></>],
  ["Надпись", <text x="8" y="14" textAnchor="middle" fontFamily="Liberation Serif, serif" fontWeight="bold" fontSize="18">A</text>],
  ["Линия", <path d="M2 3l13 11" stroke="#000" strokeWidth="1.300" />],
  ["Кривая", <path d="M8 1c8 3-2 6-1 8 4 3 3 5 0 7" stroke="#000" fill="none" strokeWidth="1.300" />],
  ["Прямоугольник", <path d="M1.500 4.500h14v9h-14z" fill="#ccc" stroke="#000" />],
  ["Многоугольник", <path d="M4.500 2.500h10l-5 7h5v5h-13z" fill="#ccc" stroke="#000" />],
  ["Эллипс", <ellipse cx="8" cy="9" rx="7.500" ry="4.500" fill="#ccc" stroke="#000" />],
  ["Скругленный прямоугольник", <rect x="1.500" y="4.500" width="14" height="9" rx="3" fill="#ccc" stroke="#000" />],
];

const Shapes = ({ clear }: { clear?: boolean }) => (
  <svg width="37" height="25">
    <path d="M1.500 1.500h27v22h-27z" fill="#ff0" stroke="#000" />
    <rect x="6.500" y="4.500" width="7" height="16" rx="3" fill="#0828c8" stroke="#000" /><path d="M9 7v11" stroke="#8ac" />
    <path d="M19.500 5.500h16v15h-16z" fill={clear ? "none" : "#fff"} stroke={clear ? "#000" : "#fff"} strokeDasharray={clear ? "2 2" : undefined} />
    {!clear && <path d="M28 5.500h-8.500v15H28" fill="none" stroke="#000" strokeDasharray="2 2" />}
    <circle cx="16" cy="17.500" r="3.500" fill="#f03050" stroke="#800" />
    <path d="M22.500 9.500l3-3h7v8l-3 3h-7z" fill="#00a820" stroke="#000" /><path d="M22.500 9.500h7v8h-7z" fill="#20e840" stroke="#040" />
  </svg>
);
const LogIcon = ({ alert }: { alert?: boolean }) => (
  <svg width="17" height="16">
    <path d="M3.500.500h12v14h-12z" fill="#fff" stroke="#000" />
    <path d="M3 1v14" stroke="#000" strokeDasharray="1 1" strokeWidth="3" />
    {alert ? <path d="M8 2h4l-1 7H9zM8 10h4v3H8z" fill="#e00" /> : <><path d="M5 8l2-4 2 3 2-4 3 3" stroke="#00c" fill="none" /><path d="M5 12l3-4 2 3 3-4 2 4" stroke="#e00" fill="none" /></>}
  </svg>
);
const SidePane = ({ right }: { right?: boolean }) => (
  <svg width="15" height="13" shapeRendering="crispEdges">
    <path d="M0 0h15v13H0z" fill="#000084" />
    <path d="M1 3h6v9H1zM8 3h6v9H8z" fill="#fff" />
    <path d={right ? "M9 4h4v1H9zM9 6h4v1H9zM9 8h4v1H9z" : "M2 4h4v1H2zM2 6h4v1H2zM2 8h4v1H2z"} fill="#000084" />
    <path d={right ? "M3 4h1v1h1v1h1v2H5v1H4v1H3z" : "M12 4h-1v1h-1v1H9v2h1v1h1v1h1z"} />
  </svg>
);

const PaintWindow = () => (
  <Win x={161} y={565} w={285}>
    <TitleBar><PaintIcon />ts.bmp - Paint<Grow /><WindowControls /></TitleBar>
    <Menu items={["&Файл", "&Правка", "&Вид", "&Рисунок", "П&алитра", "&Справка"]} dim pad="1px 40px 0 6px" />
    <PaintBody>
      <ToolBox>
        <ToolGrid>
          {paintTools.map(([name, icon], i) => (
            <PaintTool key={name} on={i === 1} aria-label={name}>
              <svg width="17" height="17">{icon}</svg>
            </PaintTool>
          ))}
        </ToolGrid>
        <Options>
          <Option on aria-label="Непрозрачный фон"><Shapes /></Option>
          <Option aria-label="Прозрачный фон"><Shapes clear /></Option>
        </Options>
      </ToolBox>
      <CanvasFrame>
        <Canvas>
          <svg width="60" height="15"><path d="M20 6l32-1-4 10H26z" fill="#ff0" /><path d="M30 15c2-6 12-6 14 0" stroke="#1030e0" strokeWidth="3" fill="#fff" /><path d="M46 12l5-2v5h-5z" fill="#e02020" /></svg>
          <Snapshot>
            <TitleBar><PerfIcon />Производительность</TitleBar>
            <SnapRow h={27} gap={8} pad={1}>
              <PerfIcon />
              <SnapMenu>
                {["&Консоль", "&Действие", "&Вид", "&Из"].map((t) => <span key={t}><Access text={t} /></span>)}
              </SnapMenu>
            </SnapRow>
            <SnapRow h={24} gap={7} pad={5}>
              <svg width="40" height="16" fill="#848284"><path d="M1 8l5-5v3h7v4H6v3zM37 8l-5-5v3h-7v4h7v3z" /></svg>
              <VSep />
              <svg width="16" height="16" shapeRendering="crispEdges"><path d="M1 3h1V2h5v1h1v1h8v10H1z" /><path d="M2 4h1V3h3v1h1v1h8v8H2z" fill="#ff8" /><path d="M6 9V8h1V7h1V6h1v1h1v1h1v1H9v2h4v1H8V9z" /></svg>
              <SnapPressed><SidePane /></SnapPressed>
              <VSep />
              <HelpSheet />
              <SidePane right />
            </SnapRow>
            <Tree>
              <Node><ConsoleFolder /><NodeLabel>Корень консоли</NodeLabel></Node>
              <Node>
                <Guide kind="t" />
                <svg width="17" height="16"><path d="M5.500 6.500h10v7h-10z" fill="#ccc" stroke="#333" /><path d="M10.500 6V2M0 8.500h4M1 12.500h4" stroke="#333" /><circle cx="10.500" cy="2.500" r="1.500" fill="#fff" stroke="#333" /></svg>
                <NodeLabel sel>Системный монитор</NodeLabel>
              </Node>
              <Node>
                <Guide kind="l" box />
                <svg width="17" height="16"><path d="M5 1h10v13H5z" fill="#fff" stroke="#000" strokeWidth="2" /><path d="M6 6l3-3 2 3 3-3" stroke="#00c" fill="none" /><path d="M7 9l3-2 4 3" stroke="#e00" fill="none" /><circle cx="5" cy="11" r="3" fill="#dc0" stroke="#000" strokeWidth="1.500" /></svg>
                <NodeLabel>Журналы и оповещения прои</NodeLabel>
              </Node>
              <Node><Guide /><Guide kind="t" /><LogIcon /><NodeLabel>Журналы счетчиков</NodeLabel></Node>
              <Node><Guide /><Guide kind="t" /><LogIcon /><NodeLabel>Журналы трассировки</NodeLabel></Node>
              <Node><Guide /><Guide kind="l" /><LogIcon alert /><NodeLabel>Оповещения</NodeLabel></Node>
            </Tree>
          </Snapshot>
        </Canvas>
        <Track vertical>
          <ScrollBtn aria-label="Вверх"><Arrow d="up" /></ScrollBtn>
          <Thumb vertical len={54} />
          <Grow />
          <ScrollBtn aria-label="Вниз"><Arrow d="down" /></ScrollBtn>
        </Track>
        <Track>
          <ScrollBtn aria-label="Влево"><Arrow d="left" /></ScrollBtn>
          <Thumb len={27} />
          <Grow />
          <ScrollBtn aria-label="Вправо"><Arrow d="right" /></ScrollBtn>
        </Track>
      </CanvasFrame>
    </PaintBody>
    <PaletteRow>
      <Current>
        <svg width="22" height="24" shapeRendering="crispEdges">
          <path d="M7 9h13v13H7z" fill="#fff" stroke="#848284" /><path d="M1 2h13v13H1z" fill="#000" stroke="#d6d3ce" strokeWidth="2" />
        </svg>
      </Current>
      <Swatches>
        {swatches.map((s) => <Swatch key={s} color={s} aria-label={s} />)}
      </Swatches>
    </PaletteRow>
    <PaintStatus cols="1fr" top={0}>
      <StatusCell>Для получения справки выберите команду "Вызов<Grip /></StatusCell>
    </PaintStatus>
  </Win>
);

/* ---------- shortcuts ---------- */
const Link = () => (
  <>
    <path d="M.500 21.500h10v10H.500z" fill="#fff" stroke="#000" />
    <path d="M3 30c0-3 1-4 3-4v-2H4h4v4l-1-1c-2 0-2 1-4 3z" stroke="#000" />
  </>
);
const Calc = () => (
  <>
    <path d="M0 15L14 1l17 16-13 13z" fill="#e8e8f0" stroke="#667" />
    <path d="M5 12l7-7 5 4-7 7z" fill="#9ab098" stroke="#667" />
    <path d="M12 18l8-8 7 7-9 9z" fill="#8088a0" />
    <path d="M14 20l8-8M17 23l8-8M15 15l6 7M18 12l6 6" stroke="#dde" />
  </>
);
const shortcuts: [string, React.ReactNode][] = [
  ["Общая папка", <><path d="M4 5h9l3 3h11v19H5z" fill="#e8c060" /><path d="M6 11h21l-2 17H5z" fill="#ffe89c" stroke="#c8a040" /></>],
  ["Система\nРЕСО ЕИС", <><path d="M8 1h18l5 5v25H8z" fill="#fff" stroke="#c8d0e0" /><path d="M24 21a9 9 0 1 1 1-5H9" fill="none" stroke="#2070b8" strokeWidth="5" /><path d="M1 24C4 10 16 3 27 5" fill="none" stroke="#f0b830" strokeWidth="2.500" /></>],
  ["СК\n'Авто-Ком...", <><Calc /><path d="M17 1h14v20l-6 5-6-6z" fill="#2858a8" stroke="#fff" /><path d="M20 4h9M28 10h-7v4h7v4h-8" fill="none" stroke="#fff" strokeWidth="1.600" /></>],
  ["СК 'ОСАГО'\n(Москва)", <Calc />],
  ["FEO", <><path d="M4 5h9l3 3h11v19H5z" fill="#e8c060" /><path d="M6 11h21l-2 17H5z" fill="#ffe89c" stroke="#c8a040" /></>],
];

/* ---------- taskbar ---------- */
const TaskBar = styled.footer`
  height: 29px;
  padding: 3px 2px 3px;
  display: flex;
  align-items: stretch;
  gap: 3px;
  background: ${c.face};
  box-shadow: inset 0 1px ${c.face}, inset 0 2px ${c.light};
`;
const TaskButton = styled.button<{ on?: boolean }>`
  flex: 1 1 0;
  max-width: 141px;
  padding: 0 4px;
  display: flex;
  align-items: center;
  gap: 4px;
  white-space: nowrap;
  overflow: hidden;
  font-weight: ${(p) => (p.on ? "bold" : "normal")};
  ${(p) => (p.on ? css`${checker} box-shadow: inset 1px 1px ${c.dark}, inset -1px -1px ${c.light};` : raised)}
`;
const StartButton = styled.button`
  width: 51px;
  padding-left: 2px;
  display: flex;
  align-items: center;
  gap: 1px;
  font-weight: bold;
  ${raised}
`;
const Quick = styled.div`
  width: 39px;
  margin-left: 4px;
  display: grid;
  place-items: center;
  border: 0 solid ${c.shadow};
  border-width: 0 1px;
  box-shadow: inset 1px 0 ${c.light}, 1px 0 ${c.light};
`;
const TaskList = styled.nav`
  flex: 1;
  display: flex;
  gap: 3px;
`;
const Lang = styled.span`
  align-self: center;
  width: 14px;
  height: 16px;
  display: grid;
  place-items: center;
  background: #0a246a;
  color: #fff;
  font-size: 10px;
`;
const Tray = styled.div`
  margin-left: 1px;
  width: 134px;
  padding: 0 6px 0 3px;
  display: flex;
  align-items: center;
  gap: 2px;
  ${sunken}
`;
const tasks: [string, React.ReactNode][] = [
  ["Производительность", <PerfIcon />],
  ["Управление компь...", <Computer />],
  ["C:\\WINDOWS\\syste...", <Folder />],
  ["D:\\events", <Folder />],
  ["Принтеры и факсы", <Printer />],
  ["Диспетчер задач W...", <Monitor />],
  ["ts.bmp - Paint", <PaintIcon />],
];

export default function App() {
  return (
    <Screen>
      <Global />
      <Desktop>
        <Peek><svg width="18" height="4"><path d="M2 3c4-3 10-3 16 1H2z" fill="#ff3" /><path d="M0 3h4" stroke="#8cf" /></svg></Peek>
        <Shortcuts>
          {shortcuts.map(([name, icon]) => (
            <Shortcut key={name} href="#">
              <svg width="32" height="33">{icon}<Link /></svg>
              {name}
            </Shortcut>
          ))}
        </Shortcuts>
        <PerformanceConsole />
        <TaskManager />
        <PaintWindow />
      </Desktop>
      <TaskBar>
        <StartButton>
          <svg width="17" height="16"><path d="M3 3c2-1 3-1 5 0L7 8c-2-1-3-1-5 0z" fill="#e84820" /><path d="M9 3c2 1 4 1 6 0l-1 5c-2 1-4 1-6 0z" fill="#50a828" /><path d="M2 9c2-1 3-1 5 0l-1 5c-2-1-3-1-5 0z" fill="#2868d8" /><path d="M8 9c2 1 4 1 6 0l-1 5c-2 1-4 1-6 0z" fill="#f0c020" /></svg>
          Пуск
        </StartButton>
        <Quick><IeGlyph /></Quick>
        <TaskList>
          {tasks.map(([name, icon]) => <TaskButton key={name} on={name === "ts.bmp - Paint"}>{icon}{name}</TaskButton>)}
        </TaskList>
        <VSep />
        <Lang>EN</Lang>
        <Tray>
          <svg width="16" height="16" shapeRendering="crispEdges"><path d="M2 2h11v11H2z" fill="#062c06" /><path d="M3 6h9v6H3z" fill="#18c818" /></svg>
          <svg width="16" height="16"><path d="M8 1l6 2c0 7-2 10-6 12C4 13 2 10 2 3z" fill="#f8d820" stroke="#887010" /><path d="M7 4h2v5H7zM7 10h2v2H7z" /></svg>
          <svg width="16" height="16"><path d="M6 1h9v8H6z" fill="#58a0e8" stroke="#ccd" /><path d="M1 5h9v8H1z" fill="#3080e0" stroke="#eef" /><path d="M3 15h6" stroke="#667" strokeWidth="2" /></svg>
          <svg width="16" height="16"><path d="M8 1l6 1v7c0 3-3 5-6 6-3-1-6-3-6-6V2z" fill="#f4c870" stroke="#c88828" /><path d="M8 1v14" stroke="#fff" strokeWidth="2" /></svg>
          <svg width="16" height="16"><path d="M1 1h14v10H1z" fill="#4890d8" stroke="#dde" /><path d="M4 4h10v8H4z" fill="#e8f0ff" stroke="#3868a8" /><path d="M4 7h10M4 9h10M8 4v8M11 4v8M4 15h9" stroke="#3868a8" /></svg>
          <Grow />
          <span>17:12</span>
        </Tray>
      </TaskBar>
    </Screen>
  );
}
